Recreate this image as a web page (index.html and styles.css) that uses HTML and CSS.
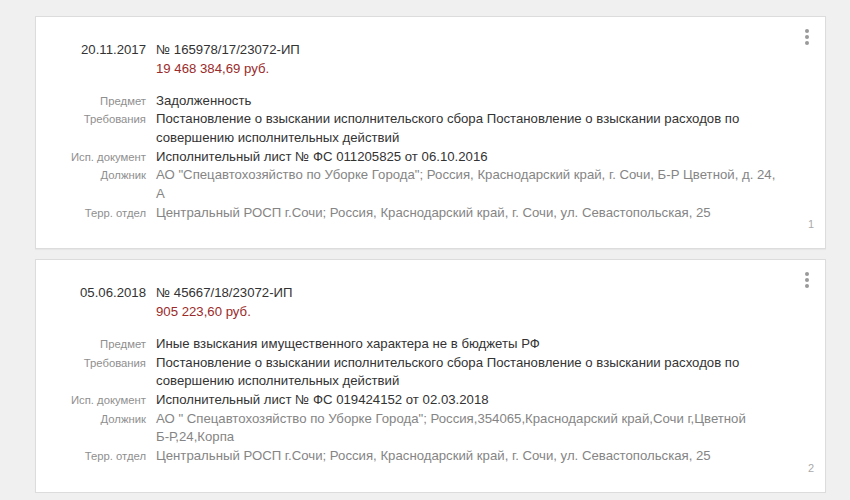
FILE: index.html
```html
<!DOCTYPE html>
<html lang="ru">
<head>
<meta charset="utf-8">
<link rel="stylesheet" href="styles.css">
</head>
<body>
<div class="list">
  <div class="card">
    <div class="menu"><span></span><span></span><span></span></div>
    <div class="grid">
      <div class="date">20.11.2017</div>
      <div class="head">
        <div class="num">№ 165978/17/23072-ИП</div>
        <div class="sum">19 468 384,69 руб.</div>
      </div>
      <div class="lbl">Предмет</div><div class="val">Задолженность</div>
      <div class="lbl">Требования</div><div class="val">Постановление о взыскании исполнительского сбора Постановление о взыскании расходов по совершению исполнительных действий</div>
      <div class="lbl">Исп. документ</div><div class="val">Исполнительный лист № ФС 011205825 от 06.10.2016</div>
      <div class="lbl">Должник</div><div class="val muted">АО "Спецавтохозяйство по Уборке Города"; Россия, Краснодарский край, г. Сочи, Б-Р Цветной, д. 24, А</div>
      <div class="lbl">Терр. отдел</div><div class="val muted">Центральный РОСП г.Сочи; Россия, Краснодарский край, г. Сочи, ул. Севастопольская, 25</div>
    </div>
    <div class="idx">1</div>
  </div>
  <div class="card">
    <div class="menu"><span></span><span></span><span></span></div>
    <div class="grid">
      <div class="date">05.06.2018</div>
      <div class="head">
        <div class="num">№ 45667/18/23072-ИП</div>
        <div class="sum">905 223,60 руб.</div>
      </div>
      <div class="lbl">Предмет</div><div class="val">Иные взыскания имущественного характера не в бюджеты РФ</div>
      <div class="lbl">Требования</div><div class="val">Постановление о взыскании исполнительского сбора Постановление о взыскании расходов по совершению исполнительных действий</div>
      <div class="lbl">Исп. документ</div><div class="val">Исполнительный лист № ФС 019424152 от 02.03.2018</div>
      <div class="lbl">Должник</div><div class="val muted">АО " Спецавтохозяйство по Уборке Города"; Россия,354065,Краснодарский край,Сочи г,Цветной <span class="nw">Б-Р,24,Корпа</span></div>
      <div class="lbl">Терр. отдел</div><div class="val muted">Центральный РОСП г.Сочи; Россия, Краснодарский край, г. Сочи, ул. Севастопольская, 25</div>
    </div>
    <div class="idx">2</div>
  </div>
</div>
</body>
</html>
```
FILE: styles.css
```css
html, body {
  margin: 0;
  padding: 0;
  background: #f0f0f0;
  font-family: "Liberation Sans", Arial, sans-serif;
  color: #333;
}
.list {
  display: flex;
  flex-direction: column;
  gap: 10px;
  padding: 16px 24px 0 35px;
}
.card {
  position: relative;
  background: #fff;
  border: 1px solid #dcdcdc;
  box-shadow: 0 1px 1px rgba(0,0,0,0.04);
  padding: 23px 0 26px 0;
}
.grid {
  display: grid;
  grid-template-columns: 110px 625px;
  column-gap: 10px;
  align-items: baseline;
}
.date {
  font-size: 13.2px;
  line-height: 19px;
  text-align: right;
  color: #333;
  align-self: start;
}
.head {
  font-size: 13.2px;
  line-height: 19px;
  margin-bottom: 13.5px;
}
.num { color: #333; }
.sum { color: #9b2b2b; }
.lbl {
  font-size: 11.3px;
  line-height: 18.7px;
  color: #8f8f8f;
  text-align: right;
  white-space: nowrap;
}
.val {
  font-size: 13.2px;
  line-height: 18.7px;
  color: #333;
}
.val.muted { color: #858585; }
.nw { white-space: nowrap; }
.menu {
  position: absolute;
  top: 12px;
  right: 16px;
  display: flex;
  flex-direction: column;
  gap: 2px;
}
.menu span {
  width: 4px;
  height: 4px;
  border-radius: 50%;
  background: #9a9a9a;
}
.idx {
  position: absolute;
  right: 11px;
  bottom: 18px;
  font-size: 11px;
  color: #aaa;
}
```
